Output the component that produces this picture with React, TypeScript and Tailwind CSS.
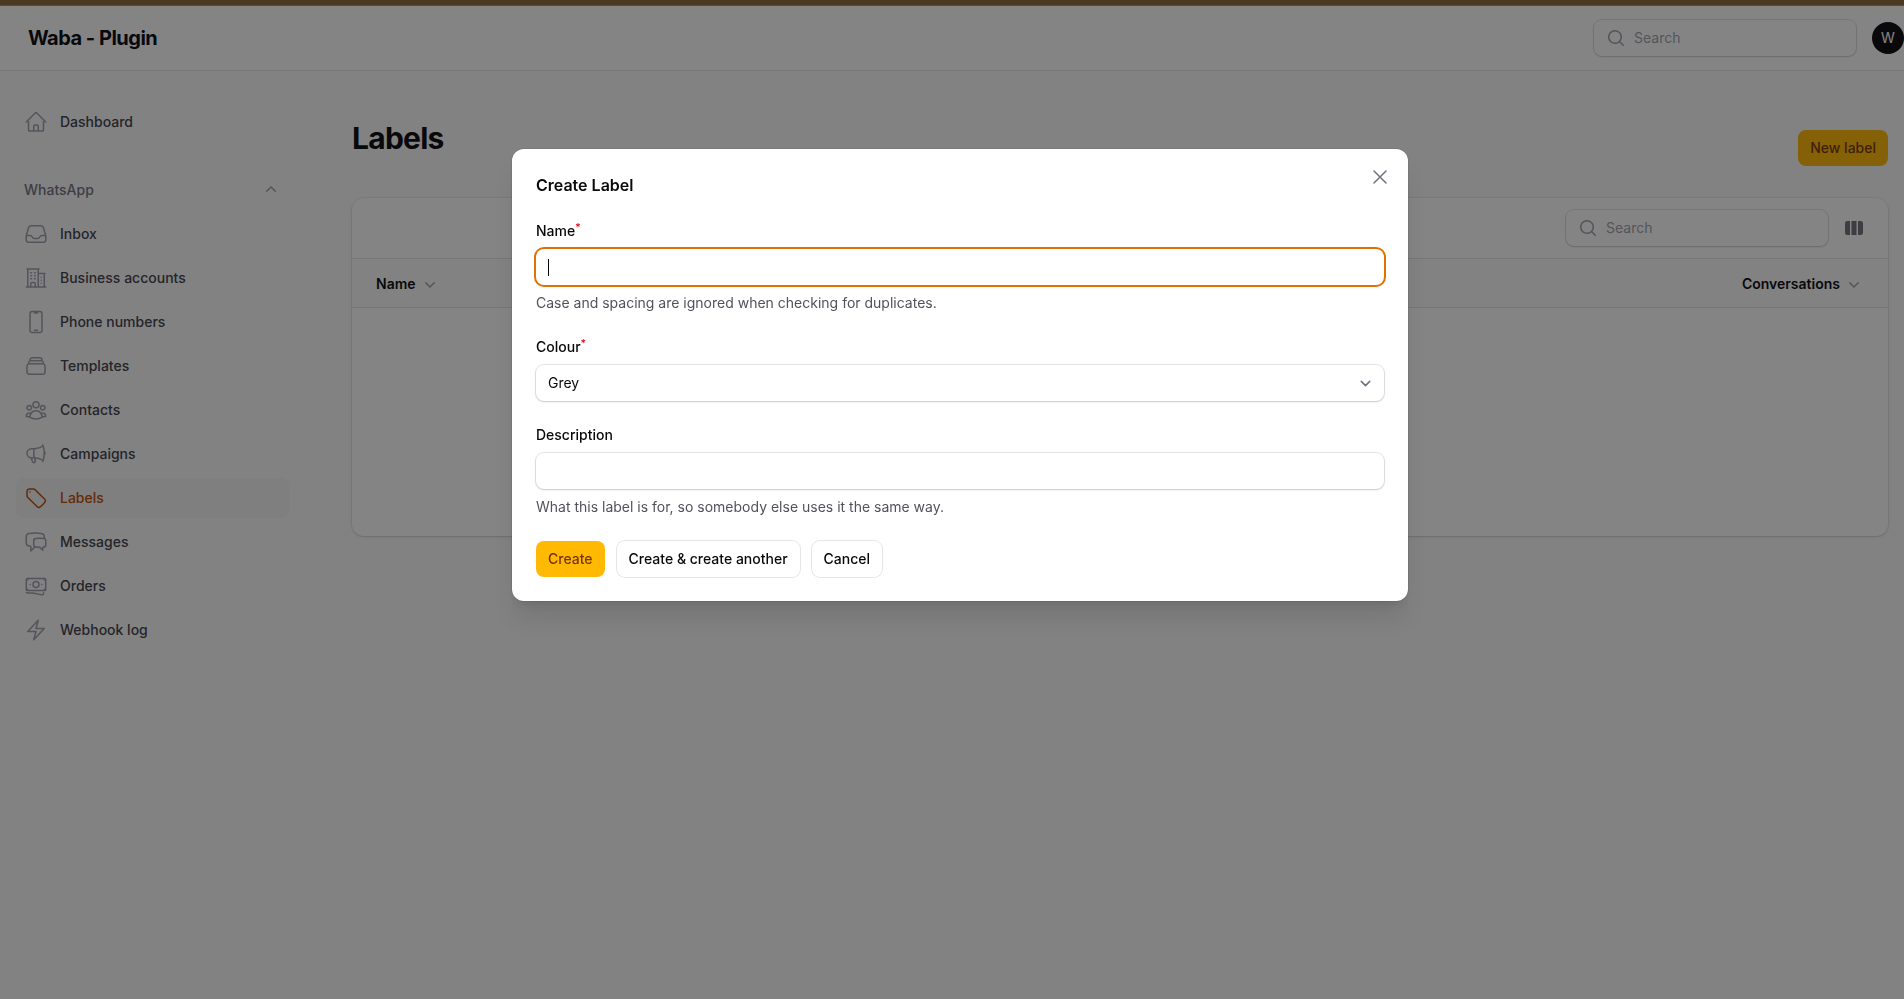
import { useState, type ReactNode } from "react";
import type { IconType } from "react-icons";
import {
  HiMiniChevronDown,
  HiMiniChevronUp,
  HiMiniMagnifyingGlass,
  HiMiniViewColumns,
  HiOutlineBanknotes,
  HiOutlineBolt,
  HiOutlineBuildingOffice2,
  HiOutlineChatBubbleLeftRight,
  HiOutlineDevicePhoneMobile,
  HiOutlineHome,
  HiOutlineInbox,
  HiOutlineMegaphone,
  HiOutlineRectangleStack,
  HiOutlineTag,
  HiOutlineUserGroup,
  HiOutlineXMark,
} from "react-icons/hi2";

type NavItem = { label: string; icon: IconType; active?: boolean };

const navItems: NavItem[] = [
  { label: "Inbox", icon: HiOutlineInbox },
  { label: "Business accounts", icon: HiOutlineBuildingOffice2 },
  { label: "Phone numbers", icon: HiOutlineDevicePhoneMobile },
  { label: "Templates", icon: HiOutlineRectangleStack },
  { label: "Contacts", icon: HiOutlineUserGroup },
  { label: "Campaigns", icon: HiOutlineMegaphone },
  { label: "Labels", icon: HiOutlineTag, active: true },
  { label: "Messages", icon: HiOutlineChatBubbleLeftRight },
  { label: "Orders", icon: HiOutlineBanknotes },
  { label: "Webhook log", icon: HiOutlineBolt },
];

const inputClass =
  "h-9 w-full rounded-lg bg-white px-3 text-sm text-zinc-950 shadow-sm ring-1 ring-zinc-950/10 outline-none focus:ring-2 focus:ring-amber-600";

const grayButtonClass =
  "h-9 rounded-lg bg-white px-3 text-sm font-medium text-zinc-950 ring-1 ring-zinc-950/10";

function NavLink({ item }: { item: NavItem }) {
  const Icon = item.icon;
  return (
    <li>
      <a
        href="#"
        className={`flex h-10 items-center gap-3 rounded-lg px-2 text-sm font-medium ${
          item.active ? "bg-zinc-100 text-amber-700" : "text-zinc-700"
        }`}
      >
        <Icon className={`size-6 ${item.active ? "text-amber-700" : "text-zinc-400"}`} />
        {item.label}
      </a>
    </li>
  );
}

function SearchBox({ label }: { label: string }) {
  return (
    <label className="flex h-9 w-[262px] items-center gap-2 rounded-lg bg-white px-3 shadow-sm ring-1 ring-zinc-950/10">
      <HiMiniMagnifyingGlass className="size-5 shrink-0 text-zinc-400" />
      <input
        type="search"
        aria-label={label}
        placeholder="Search"
        className="w-full min-w-0 bg-transparent text-sm outline-none placeholder:text-zinc-400"
      />
    </label>
  );
}

function Field({
  id,
  label,
  required,
  hint,
  children,
}: {
  id: string;
  label: string;
  required?: boolean;
  hint?: string;
  children: ReactNode;
}) {
  return (
    <div className="flex flex-col gap-2">
      <label htmlFor={id} className="h-5 text-sm font-medium text-zinc-950">
        {label}
        {required && <sup className="text-red-600">*</sup>}
      </label>
      {children}
      {hint && <p className="text-sm text-zinc-600">{hint}</p>}
    </div>
  );
}

function CreateLabelModal({ onClose }: { onClose: () => void }) {
  const [name, setName] = useState("");
  const [colour, setColour] = useState("grey");

  return (
    <div className="fixed inset-0 flex items-start justify-center bg-zinc-950/50 pt-[149px] pl-4">
      <div
        role="dialog"
        aria-modal="true"
        aria-labelledby="modal-heading"
        className="relative flex w-full max-w-4xl flex-col gap-6 rounded-xl bg-white p-6 shadow-xl ring-1 ring-zinc-950/5"
      >
        <button type="button" aria-label="Close" onClick={onClose} className="absolute top-4 right-4 text-zinc-500">
          <HiOutlineXMark className="size-6" />
        </button>
        <h2 id="modal-heading" className="text-base font-semibold text-zinc-950">
          Create Label
        </h2>

        <Field id="name" label="Name" required hint="Case and spacing are ignored when checking for duplicates.">
          <div className="relative">
            <input
              id="name"
              type="text"
              autoFocus
              value={name}
              onChange={(e) => setName(e.target.value)}
              className={`peer ${inputClass} ${name ? "" : "caret-transparent"}`}
            />
            {/* steady caret while the field is empty */}
            {!name && (
              <span className="pointer-events-none absolute inset-y-0 left-3 my-auto hidden h-[17px] w-px bg-zinc-950 peer-focus:block" />
            )}
          </div>
        </Field>

        <Field id="colour" label="Colour" required>
          <div className="relative">
            <select
              id="colour"
              value={colour}
              onChange={(e) => setColour(e.target.value)}
              className={`${inputClass} appearance-none`}
            >
              <option value="grey">Grey</option>
            </select>
            <svg
              viewBox="0 0 20 20"
              fill="none"
              className="pointer-events-none absolute inset-y-0 right-2 my-auto size-[21px] text-gray-500"
            >
              <path d="m6 8 4 4 4-4" stroke="currentColor" strokeWidth="1.5" strokeLinecap="round" strokeLinejoin="round" />
            </svg>
          </div>
        </Field>

        <Field id="description" label="Description" hint="What this label is for, so somebody else uses it the same way.">
          <input id="description" type="text" className={inputClass} />
        </Field>

        <div className="flex gap-3">
          <button type="submit" className="h-9 rounded-lg bg-amber-400 px-3 text-sm font-medium text-amber-900">
            Create
          </button>
          <button type="button" className={grayButtonClass}>
            Create &amp; create another
          </button>
          <button type="button" onClick={onClose} className={grayButtonClass}>
            Cancel
          </button>
        </div>
      </div>
    </div>
  );
}

export default function App() {
  const [open, setOpen] = useState(true);

  return (
    <div className="min-h-screen bg-zinc-50 font-[Inter,sans-serif] text-zinc-950">
      <div className="relative z-10 h-[6px] border-b border-[#5d4a44] bg-[#4b3a22]" />

      {/* Top bar */}
      <header className="flex h-16 items-center justify-between bg-white pl-7 shadow-xs ring-1 ring-zinc-950/5">
        <span className="text-xl font-bold tracking-tight">Waba - Plugin</span>
        <div className="flex items-center gap-4">
          <SearchBox label="Global search" />
          <button
            type="button"
            aria-label="User menu"
            className="flex size-8 items-center justify-center rounded-full bg-zinc-950 text-sm text-white"
          >
            W
          </button>
        </div>
      </header>

      <div className="flex">
        {/* Sidebar */}
        <nav className="flex w-80 shrink-0 flex-col gap-7 pt-8 pr-[31px] pl-4">
          <ul>
            <NavLink item={{ label: "Dashboard", icon: HiOutlineHome }} />
          </ul>
          <div className="flex flex-col gap-1">
            <button
              type="button"
              className="flex h-10 items-center justify-between px-2 text-sm font-medium text-zinc-500"
            >
              WhatsApp
              <HiMiniChevronUp className="size-5 text-zinc-400" />
            </button>
            <ul className="flex flex-col gap-1">
              {navItems.map((item) => (
                <NavLink key={item.label} item={item} />
              ))}
            </ul>
          </div>
        </nav>

        {/* Page */}
        <main className="flex min-w-0 flex-1 flex-col gap-8 pt-[50px] pr-4 pl-8">
          <div className="flex items-start justify-between">
            <h1 className="text-3xl font-bold tracking-tight">Labels</h1>
            <button
              type="button"
              onClick={() => setOpen(true)}
              className="mt-[10px] h-9 rounded-lg bg-amber-400 px-3 text-sm font-medium text-amber-900"
            >
              New label
            </button>
          </div>

          <section className="rounded-xl bg-white shadow-sm ring-1 ring-zinc-950/5">
            <div className="flex items-center justify-end gap-4 px-6 py-3">
              <SearchBox label="Search labels" />
              <button type="button" aria-label="Columns" className="text-zinc-500">
                <HiMiniViewColumns className="size-5" />
              </button>
            </div>
            <table className="w-full text-sm">
              <thead>
                <tr className="h-[49px] border-y border-zinc-200 bg-zinc-50">
                  <th className="px-6 text-left font-semibold">
                    <button type="button" className="inline-flex items-center gap-1 align-middle">
                      Name
                      <HiMiniChevronDown className="size-5 text-zinc-400" />
                    </button>
                  </th>
                  <th className="px-6 text-right font-semibold">
                    <button type="button" className="inline-flex items-center gap-1 align-middle">
                      Conversations
                      <HiMiniChevronDown className="size-5 text-zinc-400" />
                    </button>
                  </th>
                </tr>
              </thead>
              <tbody>
                <tr className="h-57">
                  <td colSpan={2} />
                </tr>
              </tbody>
            </table>
          </section>
        </main>
      </div>

      {open && <CreateLabelModal onClose={() => setOpen(false)} />}
    </div>
  );
}
